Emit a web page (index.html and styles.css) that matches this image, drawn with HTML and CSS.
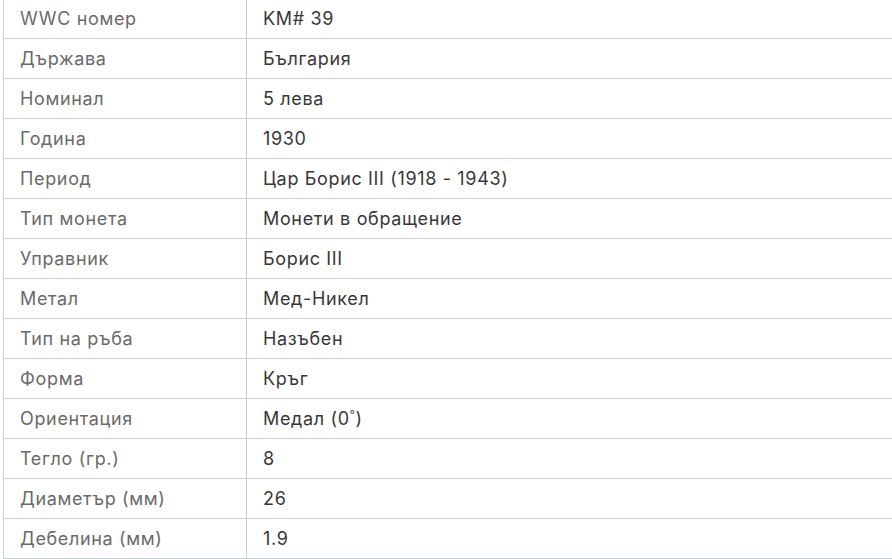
FILE: index.html
```html
<!DOCTYPE html>
<html lang="bg">
<head>
    <meta charset="UTF-8">
    <meta name="viewport" content="width=device-width, initial-scale=1.0">
    <title>Характеристики на монетата</title>
    <link rel="stylesheet" href="styles.css">
</head>
<body>

<div class="frame">
    <table class="specs">
        <tbody>
            <tr><td class="key">WWC номер</td><td class="val">KM# 39</td></tr>
            <tr><td class="key">Държава</td><td class="val">България</td></tr>
            <tr><td class="key">Номинал</td><td class="val">5 лева</td></tr>
            <tr><td class="key">Година</td><td class="val">1930</td></tr>
            <tr><td class="key">Период</td><td class="val">Цар Борис III (1918 - 1943)</td></tr>
            <tr><td class="key">Тип монета</td><td class="val">Монети в обращение</td></tr>
            <tr><td class="key">Управник</td><td class="val">Борис III</td></tr>
            <tr><td class="key">Метал</td><td class="val">Мед-Никел</td></tr>
            <tr><td class="key">Тип на ръба</td><td class="val">Назъбен</td></tr>
            <tr><td class="key">Форма</td><td class="val">Кръг</td></tr>
            <tr><td class="key">Ориентация</td><td class="val">Медал (0<sup>°</sup>)</td></tr>
            <tr><td class="key">Тегло (гр.)</td><td class="val">8</td></tr>
            <tr><td class="key">Диаметър (мм)</td><td class="val">26</td></tr>
            <tr><td class="key">Дебелина (мм)</td><td class="val">1.9</td></tr>
        </tbody>
    </table>
</div>

</body>
</html>
```

FILE: styles.css
```css
body {
    margin: 0;
    padding: 0;
    background: #fff;
    font-family: Inter, "Open Sans", sans-serif;
    overflow: hidden;
}

.frame {
    width: 892px;
    height: 559px;
    overflow: hidden;
}

.specs {
    margin: -2px 0 0 3px;
    width: 920px;
    border-collapse: collapse;
    font-size: 18px;
    line-height: 22px;
    letter-spacing: 0.65px;
}

.specs td {
    box-sizing: border-box;
    height: 40px;
    padding: 1px 16px 0;
    border: 1px solid #c8d0d5;
    vertical-align: middle;
}

.key {
    width: 243px;
    color: #6a6a6a;
}

.val {
    color: #383838;
}

.val sup {
    font-size: 11px;
    line-height: 0;
}
```
